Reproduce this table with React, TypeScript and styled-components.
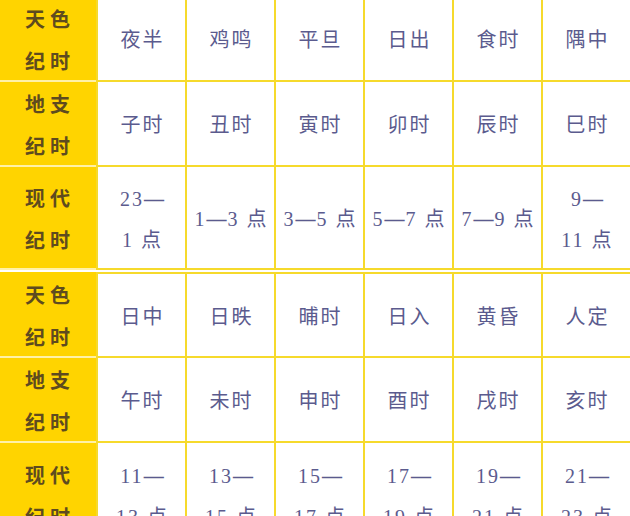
import React from 'react'
import styled, { createGlobalStyle } from 'styled-components'

const GlobalStyle = createGlobalStyle`
  html, body {
    margin: 0;
    padding: 0;
    background: #ffffff;
    overflow: hidden;
  }
`

const colors = {
  gold: '#FFD400',
  paleLine: '#FFF1A8',
  gridLine: '#F6DA2C',
  headText: '#5E4B1F',
  bodyText: '#5B5B8E',
}

const Page = styled.div`
  width: 630px;
  height: 516px;
  overflow: hidden;
  background: #fff;
`

const Table = styled.div<{ offset?: number }>`
  display: grid;
  grid-template-columns: 96px repeat(6, 89px);
  margin-top: ${(props) => props.offset ?? 0}px;
`

const HeadCell = styled.div<{ height: number }>`
  height: ${(props) => props.height}px;
  box-sizing: border-box;
  background: ${colors.gold};
  border-bottom: 2px solid ${colors.paleLine};
  display: flex;
  flex-direction: column;
  align-items: center;
  justify-content: center;
  padding: 2px 0 0 4px;
  font-family: 'Noto Sans CJK SC', 'Noto Sans', sans-serif;
  font-weight: 700;
  font-size: 20px;
  line-height: 42px;
  letter-spacing: 5px;
  color: ${colors.headText};
`

const HeadTop = styled(HeadCell)`
  border-top: 2px solid ${colors.gold};
`

const DataCell = styled.div<{ height: number; top?: boolean }>`
  height: ${(props) => props.height}px;
  box-sizing: border-box;
  border-left: 2px solid ${colors.gridLine};
  border-bottom: 2px solid ${colors.gridLine};
  border-top: ${(props) => (props.top ? `2px solid ${colors.gridLine}` : 'none')};
  display: flex;
  flex-direction: column;
  align-items: center;
  justify-content: center;
  padding: 4px 0 0 2px;
  font-family: 'Liberation Serif', 'Noto Sans CJK SC', serif;
  font-size: 20px;
  line-height: 41px;
  letter-spacing: 2px;
  color: ${colors.bodyText};
  white-space: nowrap;
`

const Dash = styled.span`
  font-family: 'Liberation Serif', serif;
  font-weight: 700;
  letter-spacing: 1px;
`

type Row = { label: [string, string]; cells: string[][]; height: number }

const firstHalf: Row[] = [
  {
    label: ['天色', '纪时'],
    cells: [['夜半'], ['鸡鸣'], ['平旦'], ['日出'], ['食时'], ['隅中']],
    height: 85,
  },
  {
    label: ['地支', '纪时'],
    cells: [['子时'], ['丑时'], ['寅时'], ['卯时'], ['辰时'], ['巳时']],
    height: 85,
  },
  {
    label: ['现代', '纪时'],
    cells: [['23—', '1 点'], ['1—3 点'], ['3—5 点'], ['5—7 点'], ['7—9 点'], ['9—', '11 点']],
    height: 103,
  },
]

const secondHalf: Row[] = [
  {
    label: ['天色', '纪时'],
    cells: [['日中'], ['日昳'], ['晡时'], ['日入'], ['黄昏'], ['人定']],
    height: 86,
  },
  {
    label: ['地支', '纪时'],
    cells: [['午时'], ['未时'], ['申时'], ['酉时'], ['戌时'], ['亥时']],
    height: 85,
  },
  {
    label: ['现代', '纪时'],
    cells: [['11—', '13 点'], ['13—', '15 点'], ['15—', '17 点'], ['17—', '19 点'], ['19—', '21 点'], ['21—', '23 点']],
    height: 106,
  },
]

// split a line so the dash gets its own heavier glyph
function Line({ text }: { text: string }) {
  const parts = text.split('—')
  return (
    <span>
      {parts.map((p, i) => (
        <React.Fragment key={i}>
          {i > 0 && <Dash>—</Dash>}
          {p}
        </React.Fragment>
      ))}
    </span>
  )
}

function TimeTable({ rows, offset, withTop }: { rows: Row[]; offset?: number; withTop?: boolean }) {
  return (
    <Table offset={offset}>
      {rows.map((row, r) => {
        const isTop = withTop && r === 0
        const Head = isTop ? HeadTop : HeadCell
        return (
          <React.Fragment key={r}>
            <Head height={row.height}>
              <span>{row.label[0]}</span>
              <span>{row.label[1]}</span>
            </Head>
            {row.cells.map((lines, c) => (
              <DataCell key={c} height={row.height} top={isTop}>
                {lines.map((line, i) => (
                  <Line key={i} text={line} />
                ))}
              </DataCell>
            ))}
          </React.Fragment>
        )
      })}
    </Table>
  )
}

export default function App() {
  return (
    <Page>
      <GlobalStyle />
      <TimeTable rows={firstHalf} offset={-3} />
      <TimeTable rows={secondHalf} offset={2} withTop />
    </Page>
  )
}
